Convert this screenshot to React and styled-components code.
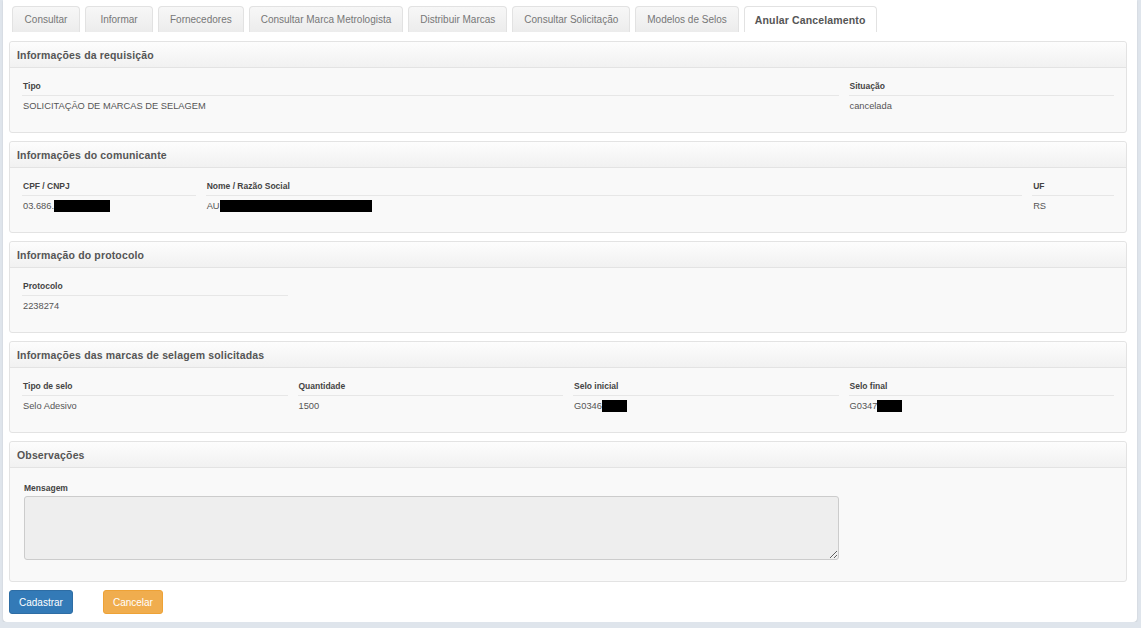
import React from 'react'
import styled, { createGlobalStyle } from 'styled-components'

const GlobalStyle = createGlobalStyle`
  html, body {
    margin: 0;
    padding: 0;
    background: #dfe5ec;
    font-family: 'Liberation Sans', Arial, sans-serif;
  }
`

const tabs = [
  'Consultar',
  'Informar',
  'Fornecedores',
  'Consultar Marca Metrologista',
  'Distribuir Marcas',
  'Consultar Solicitação',
  'Modelos de Selos',
  'Anular Cancelamento',
]

const App = () => {
  return (
    <>
      <GlobalStyle />
      <Page>
        <TabBar>
          {tabs.map((t, i) => (
            <Tab key={t} $active={i === tabs.length - 1}>
              {t}
            </Tab>
          ))}
        </TabBar>

        <Content>
          <Panel>
            <PanelHeader>Informações da requisição</PanelHeader>
            <PanelBody>
              <Row $cols="9fr 3fr">
                <Field>
                  <Label>Tipo</Label>
                  <Value>SOLICITAÇÃO DE MARCAS DE SELAGEM</Value>
                </Field>
                <Field>
                  <Label>Situação</Label>
                  <Value>cancelada</Value>
                </Field>
              </Row>
            </PanelBody>
          </Panel>

          <Panel>
            <PanelHeader>Informações do comunicante</PanelHeader>
            <PanelBody>
              <Row $cols="2fr 9fr 1fr">
                <Field>
                  <Label>CPF / CNPJ</Label>
                  <Value>
                    03.686.<Redacted $w={56} />
                  </Value>
                </Field>
                <Field>
                  <Label>Nome / Razão Social</Label>
                  <Value>
                    AU<Redacted $w={152} />
                  </Value>
                </Field>
                <Field>
                  <Label>UF</Label>
                  <Value>RS</Value>
                </Field>
              </Row>
            </PanelBody>
          </Panel>

          <Panel>
            <PanelHeader>Informação do protocolo</PanelHeader>
            <PanelBody>
              <Row $cols="3fr 9fr">
                <Field>
                  <Label>Protocolo</Label>
                  <Value>2238274</Value>
                </Field>
              </Row>
            </PanelBody>
          </Panel>

          <Panel>
            <PanelHeader>Informações das marcas de selagem solicitadas</PanelHeader>
            <PanelBody>
              <Row $cols="1fr 1fr 1fr 1fr">
                <Field>
                  <Label>Tipo de selo</Label>
                  <Value>Selo Adesivo</Value>
                </Field>
                <Field>
                  <Label>Quantidade</Label>
                  <Value>1500</Value>
                </Field>
                <Field>
                  <Label>Selo inicial</Label>
                  <Value>
                    G0346<Redacted $w={25} />
                  </Value>
                </Field>
                <Field>
                  <Label>Selo final</Label>
                  <Value>
                    G0347<Redacted $w={25} />
                  </Value>
                </Field>
              </Row>
            </PanelBody>
          </Panel>

          <Panel>
            <PanelHeader>Observações</PanelHeader>
            <ObsBody>
              <MsgLabel>Mensagem</MsgLabel>
              <MessageBox disabled />
            </ObsBody>
          </Panel>
        </Content>

        <Actions>
          <Button $kind="primary">Cadastrar</Button>
          <Button $kind="warning">Cancelar</Button>
        </Actions>
      </Page>
    </>
  )
}

const Page = styled.div`
  margin: 0 4px 0 3px;
  height: 622px;
  box-sizing: border-box;
  background: #fff;
  border-radius: 0 0 4px 4px;
  box-shadow: 0 1px 2px rgba(0, 0, 0, 0.12);
  padding: 6px 6px 0 6px;
`

const TabBar = styled.div`
  display: flex;
  gap: 5px;
  padding-left: 3px;
  height: 26px;
`

const Tab = styled.div`
  height: 26px;
  min-width: 68px;
  box-sizing: border-box;
  padding: 0 ${p => (p.$active ? '10px' : '11px')};
  display: flex;
  align-items: center;
  justify-content: center;
  font-size: ${p => (p.$active ? '10.5px' : '10px')};
  font-weight: ${p => (p.$active ? 'bold' : 'normal')};
  letter-spacing: ${p => (p.$active ? '0.15px' : '0')};
  color: ${p => (p.$active ? '#555' : '#777')};
  border: 1px solid #e2e2e2;
  border-bottom: none;
  border-radius: 4px 4px 0 0;
  background: ${p =>
    p.$active ? '#fff' : 'linear-gradient(to bottom, #f7f7f7, #ececec)'};
`

const Content = styled.div`
  display: flex;
  flex-direction: column;
  gap: 8px;
  margin-top: 9px;
  margin-right: 4px;
`

const Panel = styled.div`
  border: 1px solid #e3e3e3;
  border-radius: 3px;
  background: #f9f9f9;
`

const PanelHeader = styled.div`
  height: 26px;
  box-sizing: border-box;
  display: flex;
  align-items: center;
  padding: 0 7px;
  font-size: 10.5px;
  font-weight: bold;
  letter-spacing: 0.15px;
  color: #555;
  background: linear-gradient(to bottom, #fdfdfd, #f1f1f1);
  border-bottom: 1px solid #e3e3e3;
  border-radius: 3px 3px 0 0;
`

const PanelBody = styled.div`
  padding: 13px 7px 19px 7px;
`

const Row = styled.div`
  display: grid;
  grid-template-columns: ${p => p.$cols};
`

const Field = styled.div`
  padding: 0 5px;
  display: flex;
  flex-direction: column;
`

const Label = styled.div`
  font-size: 8.5px;
  line-height: 11px;
  height: 11px;
  font-weight: bold;
  color: #444;
  padding: 0 1px 3px 1px;
  border-bottom: 1px solid #e7e7e7;
`

const Value = styled.div`
  font-size: 9.3px;
  line-height: 14px;
  color: #555;
  padding: 3px 1px 0 1px;
  display: flex;
  align-items: center;
  height: 14px;
`

const Redacted = styled.span`
  display: inline-block;
  width: ${p => p.$w}px;
  height: 12px;
  background: #000;
`

const ObsBody = styled.div`
  padding: 15px 7px 21px 14px;
`

const MsgLabel = styled.div`
  font-size: 8.5px;
  line-height: 11px;
  font-weight: bold;
  color: #444;
  margin-bottom: 2px;
`

const MessageBox = styled.textarea`
  display: block;
  width: 815px;
  height: 64px;
  box-sizing: border-box;
  background: #eee;
  border: 1px solid #ccc;
  border-radius: 3px;
  resize: vertical;
  margin: 0;
`

const Button = styled.button`
  height: 24px;
  padding: 0 9px;
  border-radius: 3px;
  font-family: 'Liberation Sans', Arial, sans-serif;
  font-size: 10px;
  color: #fff;
  cursor: pointer;
  background: ${p => (p.$kind === 'primary' ? '#337ab7' : '#f0ad4e')};
  border: 1px solid ${p => (p.$kind === 'primary' ? '#2e6da4' : '#eea236')};
`

const Actions = styled.div`
  display: flex;
  gap: 30px;
  margin-top: 8px;
`

export default App
